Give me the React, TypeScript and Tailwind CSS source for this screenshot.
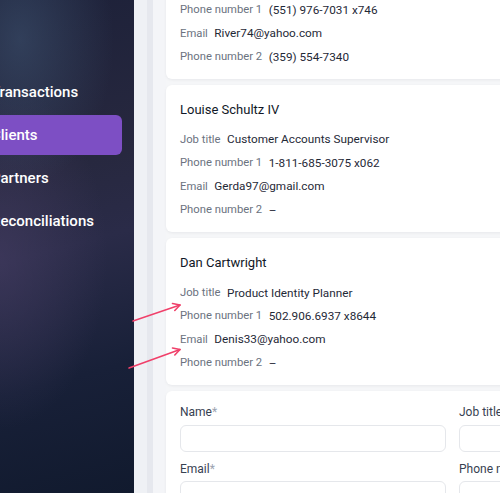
import * as React from 'react';

type Field = { label: string; value?: string };
type Contact = { name: string; fields: Field[] };

const navigation = [
    { name: 'Transactions', current: false },
    { name: 'Clients', current: true },
    { name: 'Partners', current: false },
    { name: 'Reconciliations', current: false },
];

const contacts: Contact[] = [
    {
        name: 'River Hessel',
        fields: [
            { label: 'Job title', value: 'Dynamic Branding Analyst' },
            { label: 'Phone number 1', value: '(551) 976-7031 x746' },
            { label: 'Email', value: 'River74@yahoo.com' },
            { label: 'Phone number 2', value: '(359) 554-7340' },
        ],
    },
    {
        name: 'Louise Schultz IV',
        fields: [
            { label: 'Job title', value: 'Customer Accounts Supervisor' },
            { label: 'Phone number 1', value: '1-811-685-3075 x062' },
            { label: 'Email', value: 'Gerda97@gmail.com' },
            { label: 'Phone number 2' },
        ],
    },
    {
        name: 'Dan Cartwright',
        fields: [
            { label: 'Job title', value: 'Product Identity Planner' },
            { label: 'Phone number 1', value: '502.906.6937 x8644' },
            { label: 'Email', value: 'Denis33@yahoo.com' },
            { label: 'Phone number 2' },
        ],
    },
];

function classNames(...classes: string[]) {
    return classes.filter(Boolean).join(' ');
}

const ContactCard = ({ contact }: { contact: Contact }) => (
    <div className="w-[360px] shrink-0 rounded-md bg-white pt-[15px] pb-[9.5px] px-[14px] shadow-[0_1px_3px_rgba(17,24,39,0.06)]">
        <div className="h-5 leading-5 text-[13px] text-[#111827]">{contact.name}</div>
        <div className="mt-[8.5px] flex flex-col">
            {contact.fields.map((field) => (
                <div key={field.label} className="flex h-[23.4px] items-center">
                    <span className="text-[11.25px] text-[#6b7280]">{field.label}</span>
                    <span className="ml-[6.5px] text-[11.75px] text-[#1f2937]">{field.value ?? '–'}</span>
                </div>
            ))}
        </div>
    </div>
);

const FormField = ({ label }: { label: string }) => (
    <div className="flex w-[266px] shrink-0 flex-col">
        <label className="h-4 leading-4 text-[12px] text-[#374151]">
            {label}
            <span className="text-[#9ca3af]">*</span>
        </label>
        <input className="mt-[4.5px] h-[27px] rounded-md border border-[#e5e7eb] bg-white outline-none" />
    </div>
);

export default function App() {
    return (
        <div className="relative flex h-[493px] w-[500px] overflow-hidden bg-[#f5f6f8] font-['Roboto',sans-serif]">
            <aside className="w-[134px] shrink-0 bg-[radial-gradient(ellipse_70%_30%_at_15%_8%,rgba(64,86,116,0.55)_0%,transparent_100%),radial-gradient(ellipse_80%_35%_at_0%_52%,rgba(70,62,100,0.6)_0%,transparent_100%),linear-gradient(165deg,#1d2139_0%,#27283f_35%,#2a2b48_50%,#182038_75%,#111a2e_100%)]">
                <nav className="ml-[-21px] mr-3 mt-[72px] flex flex-col gap-[3px]">
                    {navigation.map((item) => (
                        <a
                            key={item.name}
                            href="#"
                            className={classNames(
                                item.current ? 'bg-[#7d4fc4]' : '',
                                'flex h-10 items-center rounded-md px-3 text-[15px] font-medium text-white'
                            )}
                        >
                            {item.name}
                        </a>
                    ))}
                </nav>
            </aside>
            <div className="w-[13px] shrink-0 bg-[#eff1f5]" />
            <div className="w-[6px] shrink-0 bg-[#e6e8ee]" />
            <div className="w-[13px] shrink-0 bg-[#f4f5f8]" />
            <main className="-mt-[68px] flex flex-col gap-[6.5px]">
                {contacts.map((c) => (
                    <ContactCard key={c.name} contact={c} />
                ))}
                <div className="w-[360px] rounded-md bg-white px-[14px] pt-[13px] pb-4 shadow-[0_1px_3px_rgba(17,24,39,0.06)]">
                    <div className="flex gap-[13px]">
                        <FormField label="Name" />
                        <FormField label="Job title" />
                    </div>
                    <div className="mt-[9px] flex gap-[13px]">
                        <FormField label="Email" />
                        <FormField label="Phone number 1" />
                    </div>
                </div>
            </main>
            <svg className="pointer-events-none absolute inset-0" width="500" height="493" viewBox="0 0 500 493" fill="none">
                <g stroke="#f0406a" strokeWidth="1.6" strokeLinecap="round" strokeLinejoin="round">
                    <path d="M133 321 L180 305" />
                    <path d="M172.5 303.5 L180 305 L174.8 310.5" />
                    <path d="M129 368 L180 349.5" />
                    <path d="M172.5 348 L180 349.5 L174.8 355" />
                </g>
            </svg>
        </div>
    );
}
